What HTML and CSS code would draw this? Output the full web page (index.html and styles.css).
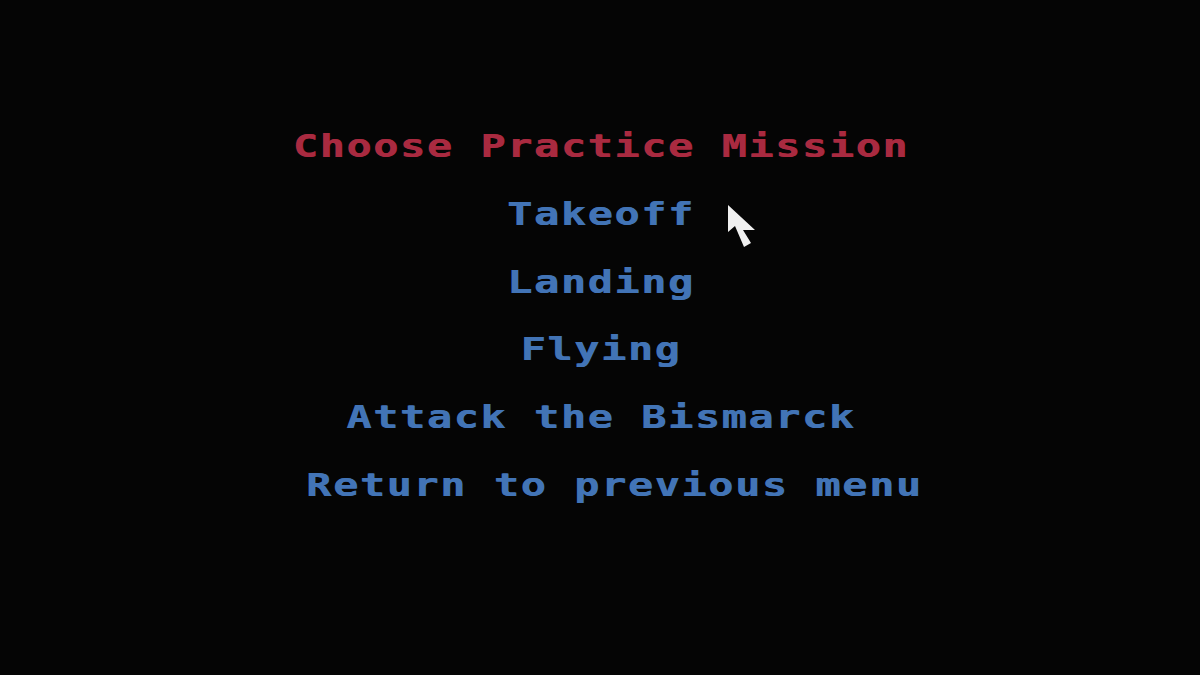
FILE: index.html
```html
<!DOCTYPE html>
<html lang="en">
<head>
<meta charset="utf-8">
<title>Choose Practice Mission</title>
<link rel="stylesheet" href="styles.css">
</head>
<body>
<main class="screen">
  <ul class="menu">
    <li class="menu-line menu-title">Choose Practice Mission</li>
    <li class="menu-line menu-item">Takeoff</li>
    <li class="menu-line menu-item">Landing</li>
    <li class="menu-line menu-item">Flying</li>
    <li class="menu-line menu-item">Attack the Bismarck</li>
    <li class="menu-line menu-item menu-item-shift">Return to previous menu</li>
  </ul>
  <svg class="pointer" width="30" height="50" viewBox="0 0 30 50" aria-hidden="true">
    <polygon points="1,1 1,28 8,22 17,43 24,39 16,26 28,26" fill="#f0f0f0"/>
  </svg>
</main>
</body>
</html>
```
FILE: styles.css
```css
html, body {
  margin: 0;
  padding: 0;
  background: #050505;
}

.screen {
  position: relative;
  width: 1200px;
  height: 675px;
  overflow: hidden;
  background: #050505;
}

.menu {
  list-style: none;
  margin: 0;
  padding: 113px 0 0 0;
  display: flex;
  flex-direction: column;
}

.menu-line {
  display: block;
  text-align: center;
  font-family: "DejaVu Sans Mono", "Liberation Mono", monospace;
  font-weight: bold;
  font-size: 32px;
  line-height: 67.8px;
  height: 67.8px;
  letter-spacing: 1.35px;
  padding-left: 1.35px;
  transform: scaleX(1.3);
  transform-origin: center;
  white-space: pre;
  text-shadow: 0.6px 0 0 currentColor;
}

.menu-title {
  color: #a92a40;
}

.menu-item {
  color: #4274b6;
}

.menu-item-shift {
  padding-left: 22px;
}

.pointer {
  position: absolute;
  left: 727px;
  top: 204px;
}
```
